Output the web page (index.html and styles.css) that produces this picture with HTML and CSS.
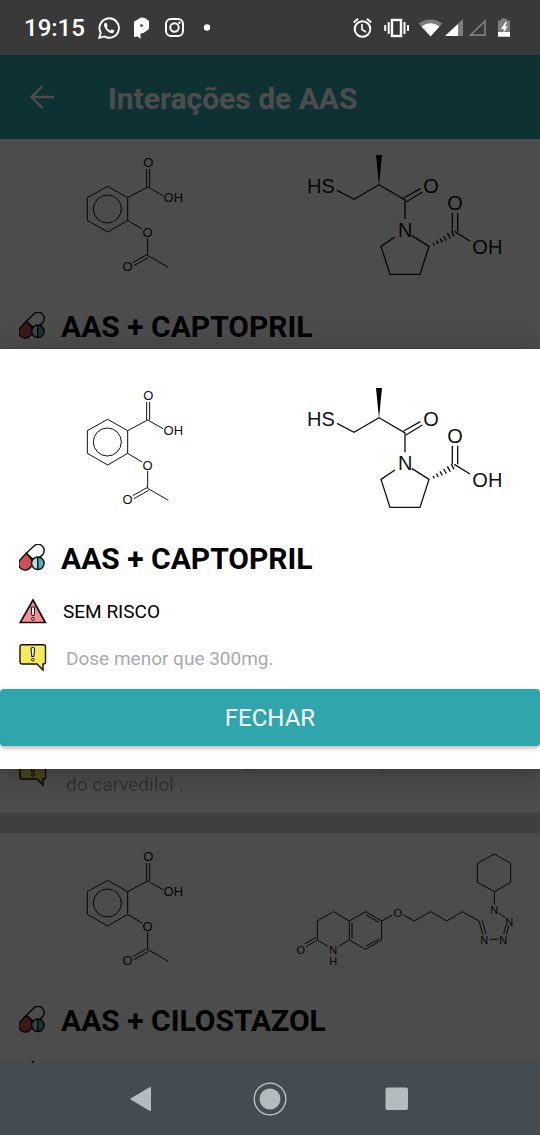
FILE: index.html
```html
<!DOCTYPE html>
<html lang="pt-BR">
<head>
<meta charset="utf-8">
<meta name="viewport" content="width=device-width, initial-scale=1">
<title>Interações de AAS</title>
<link rel="stylesheet" href="styles.css">
</head>
<body>
<svg class="sprite" aria-hidden="true">
  <symbol id="pills" viewBox="1 0 29 29">
    <path d="M8.500 9.500 16 2.500A6.200 6.200 0 0 1 25.500 11L18 18Z" fill="#fff" stroke="#111" stroke-width="1.500"/>
    <path d="M8.500 9.500 3 15.500A6.500 6.500 0 0 0 11.500 25.500L16 21 13.500 15Z" fill="#cf5055" stroke="#111" stroke-width="1.500"/>
    <circle cx="20.500" cy="20" r="6.500" fill="#b4dfe2"/>
    <path d="M20.500 13.500a6.500 6.500 0 0 1 0 13z" fill="#4db3b3"/>
    <circle cx="20.500" cy="20" r="6.500" fill="none" stroke="#111" stroke-width="1.500"/>
    <path d="M20.500 13.500v13" stroke="#111" stroke-width="1.500"/>
  </symbol>
  <symbol id="warning" viewBox="0 0 28 28">
    <path d="M14 3 26.300 25.500H1.200Z" fill="#f58f94" stroke="#111" stroke-width="1.700"/>
    <path d="M12.300 10h3.400l-.5 8.500h-2.400z" fill="#fff" stroke="#111" stroke-width="1"/>
    <circle cx="14" cy="21.800" r="1.400" fill="#fff" stroke="#111"/>
  </symbol>
  <symbol id="note" viewBox="0 0 28 28">
    <path d="M3 .700H24.500a2 2 0 0 1 2 2V18a2 2 0 0 1-2 2H24V26L18 20H3a2 2 0 0 1-2-2V2.700a2 2 0 0 1 2-2Z" fill="#f8e957" stroke="#111" stroke-width="1.400"/>
    <path d="M12 5q0-1.500 1.800-1.500T15.600 5L14.800 12.500h-2z" fill="#fff" stroke="#111" stroke-width="1.100"/>
    <circle cx="13.800" cy="15.700" r="1.300" fill="#fff" stroke="#111"/>
  </symbol>
</svg>

<div class="phone">
  <header class="status">
    <div class="status-group">
      <span class="clock">19:15</span>
      <svg class="s-icon" viewBox="0 0 22 22"><path d="M1.300 20.800 2.700 15.700A9.700 9.700 0 1 1 6.300 19.400Z" fill="none" stroke="#fff" stroke-width="1.900"/><path d="M7.600 5.800 6.300 6.600Q5.300 9 8 12.500T14.500 16.300Q16.500 15.500 16.300 13.600L13.700 12.300 12.300 13.800Q10 12.900 8.700 10.200L9.600 8.900 8.600 6Z" fill="#fff"/></svg>
      <svg class="s-icon" viewBox="0 0 22 22"><path fill-rule="evenodd" d="M3 4.500 6 3 10 .500 14 1 18 4V12L12.500 16 9.500 16.500V22L6.500 19.500 3 20ZM9.500 6.800V10.200L12.800 8.500Z" fill="#fff"/></svg>
      <svg class="s-icon" viewBox="0 0 22 22"><rect x="2" y="2" width="17" height="17" rx="5" fill="none" stroke="#fff" stroke-width="2"/><circle cx="10.500" cy="10.500" r="4.200" fill="none" stroke="#fff" stroke-width="2"/><circle cx="15.500" cy="5.700" r="1.200" fill="#fff"/></svg>
      <svg class="s-icon" viewBox="0 0 22 22"><circle cx="10" cy="10.500" r="3.200" fill="#fff"/></svg>
    </div>
    <svg class="signals" viewBox="0 0 162 24" aria-label="Alarme, vibrar, rede e bateria">
      <g fill="none" stroke="#fff" stroke-width="2"><circle cx="12.500" cy="13" r="7.800"/><path d="M12 8v5.500l4 2.500" stroke-width="1.600"/><path d="M3.800 6.500 8 2.800M21.200 6.500 17 2.800"/><rect x="42" y="4" width="9" height="16" stroke-width="2.400"/><path d="M38.700 6v12M54.500 6v12M35.200 9v6M58 9v6"/></g>
      <path d="M68.500 7.500Q80.500-.500 92.500 7.500L80.500 20Z" fill="#7d7d7d"/>
      <path d="M71.500 10.500Q80.500 4 89.500 10.500L80.500 20.500Z" fill="#fff"/>
      <path d="M113 3V20H95Z" fill="#7d7d7d"/><path d="M108 8V20H95Z" fill="#fff"/>
      <path d="M135 5V19.200H120.500Z" fill="none" stroke="#7d7d7d" stroke-width="1.700"/>
      <path d="M151 2.500h6v2h3V16h-12V4.500h3Z" fill="#7d7d7d"/><path d="M148 16h12v4.700h-12Z" fill="#fff"/><path d="M155.500 6 151 13h2.700v3.500L157.500 10.500h-2.500l2-4.500Z" fill="#fff"/>
    </svg>
  </header>

  <div class="app">
    <div class="appbar">
      <button class="back" type="button" aria-label="Voltar"><svg viewBox="0 0 26 26"><path d="M25 13H3M13.500 2 2.500 13l11 11" fill="none" stroke="#fff" stroke-width="2.400"/></svg></button>
      <h1>Interações de AAS</h1>
    </div>

    <main class="list">
      <article class="card">
        <div class="molecules">
          <svg class="mol small" viewBox="-210 -24 810 450"><path d="M113 118 173 152V220L113 255 52 220V152ZM173 152 233 120 279 146M230 120V66M239 120V66M173 220 216 246M233 273V325L295 361M233 322 188 347M236 331 192 356"/><circle cx="112" cy="186" r="42"/><text x="235" y="61">O</text><text x="310" y="166">OH</text><text x="233" y="269">O</text><text x="173" y="373">O</text></svg>
          <svg class="mol large" viewBox="-75 -9 810 450"><path d="M126 145 177 172 252 128 330 174V232M326 168 376 140M333 180 382 150M350 280 402 313 375 397H285L258 313 300 285M472 268V212M488 268V212M478 268 525 297"/><path class="solid" d="M252 130 243 39H261Z"/><path d="M414 303 418 310M424 296 430 306M435 289 442 301M446 282 454 296M457 274 466 290M469 267 477 283"/><text x="78" y="152">HS</text><text x="408" y="152">O</text><text x="331" y="284">N</text><text x="480" y="205">O</text><text x="577" y="337">OH</text></svg>
        </div>
        <h2 class="row title"><svg class="icon"><use href="#pills"/></svg>AAS + CAPTOPRIL</h2>
        <p class="row risk"><svg class="icon"><use href="#warning"/></svg></p>
        <p class="row note"><svg class="icon"><use href="#note"/></svg></p>
      </article>

      <article class="card">
        <div class="molecules"></div>
        <h2 class="row title"><svg class="icon"><use href="#pills"/></svg></h2>
        <p class="row risk"><svg class="icon"><use href="#warning"/></svg></p>
        <p class="row note"><svg class="icon"><use href="#note"/></svg><span>Reduz o efeito clínico, se necessários,<br>do carvedilol .</span></p>
      </article>

      <article class="card">
        <div class="molecules">
          <svg class="mol small" viewBox="-210 -24 810 450"><path d="M113 118 173 152V220L113 255 52 220V152ZM173 152 233 120 279 146M230 120V66M239 120V66M173 220 216 246M233 273V325L295 361M233 322 188 347M236 331 192 356"/><circle cx="112" cy="186" r="42"/><text x="235" y="61">O</text><text x="310" y="166">OH</text><text x="233" y="269">O</text><text x="173" y="373">O</text></svg>
          <svg class="mol tiny" viewBox="-30 -21 810 450"><path d="M643 42 692 70V127L643 155 592 127V70ZM643 155V194M658 220 676 233M686 258 679 284M678 256 671 281M629 298H655M597 243 609 284M606 241 618 281M597 243 547 215 500 243 452 215 403 243 369 224M337 225 305 243V300L257 328 208 300V243L257 215 305 243M257 224 297 247M298 297 257 319M216 248V296M208 243 160 215 112 243V300L145 320M175 320 208 300M112 300 78 320M108 292 74 312"/><text x="643" y="221">N</text><text x="688" y="257">N</text><text x="670" y="311">N</text><text x="613" y="311">N</text><text x="353" y="230">O</text><text x="62" y="342">O</text><text x="160" y="341">N</text><text x="160" y="375">H</text></svg>
        </div>
        <h2 class="row title"><svg class="icon"><use href="#pills"/></svg>AAS + CILOSTAZOL</h2>
        <p class="row risk"><svg class="icon"><use href="#warning"/></svg></p>
      </article>
    </main>

    <div class="scrim">
      <section class="dialog" role="dialog" aria-modal="true" aria-label="AAS + CAPTOPRIL">
        <div class="molecules">
          <svg class="mol small" viewBox="-210 -27 810 450"><path d="M113 118 173 152V220L113 255 52 220V152ZM173 152 233 120 279 146M230 120V66M239 120V66M173 220 216 246M233 273V325L295 361M233 322 188 347M236 331 192 356"/><circle cx="112" cy="186" r="42"/><text x="235" y="61">O</text><text x="310" y="166">OH</text><text x="233" y="269">O</text><text x="173" y="373">O</text></svg>
          <svg class="mol large" viewBox="-75 -12 810 450"><path d="M126 145 177 172 252 128 330 174V232M326 168 376 140M333 180 382 150M350 280 402 313 375 397H285L258 313 300 285M472 268V212M488 268V212M478 268 525 297"/><path class="solid" d="M252 130 243 39H261Z"/><path d="M414 303 418 310M424 296 430 306M435 289 442 301M446 282 454 296M457 274 466 290M469 267 477 283"/><text x="78" y="152">HS</text><text x="408" y="152">O</text><text x="331" y="284">N</text><text x="480" y="205">O</text><text x="577" y="337">OH</text></svg>
        </div>
        <h2 class="row title"><svg class="icon"><use href="#pills"/></svg>AAS + CAPTOPRIL</h2>
        <p class="row risk"><svg class="icon"><use href="#warning"/></svg>SEM RISCO</p>
        <p class="row note"><svg class="icon"><use href="#note"/></svg><span>Dose menor que 300mg.</span></p>
        <button class="close" type="button">FECHAR</button>
      </section>
    </div>
  </div>

  <nav class="navbar">
    <button type="button" aria-label="Voltar"><svg viewBox="0 0 34 34"><path d="M5.500 17 24 6V28Z" fill="#b5bcbf" stroke="#b5bcbf" stroke-width="2" stroke-linejoin="round"/></svg></button>
    <button type="button" aria-label="Início"><svg viewBox="0 0 34 34"><circle cx="17" cy="17" r="15.800" fill="none" stroke="#b5bcbf" stroke-width="1.500"/><circle cx="17" cy="17" r="10.500" fill="#b5bcbf"/></svg></button>
    <button type="button" aria-label="Recentes"><svg viewBox="0 0 34 34"><rect x="5.500" y="5.500" width="22.500" height="22.500" rx="2" fill="#b5bcbf"/></svg></button>
  </nav>
</div>
</body>
</html>
```

FILE: styles.css
```css
* { box-sizing: border-box; }

body {
  margin: 0;
  font-family: Roboto, "Liberation Sans", sans-serif;
  color: #000;
}

h1, h2, p { margin: 0; }

button {
  margin: 0;
  padding: 0;
  border: 0;
  background: none;
  font: inherit;
}

svg { display: block; }

.sprite {
  position: absolute;
  width: 0;
  height: 0;
}

.phone {
  display: flex;
  flex-direction: column;
  height: 100vh;
}

.status {
  display: flex;
  align-items: center;
  justify-content: space-between;
  height: 55px;
  padding: 0 28px 0 24px;
  background: #393939;
  color: #fff;
}

.status-group {
  display: flex;
  align-items: center;
  gap: 11px;
}

.clock {
  margin-right: 2px;
  font-size: 24px;
  font-weight: 500;
}

.s-icon { width: 22px; height: 22px; }

.signals { width: 162px; height: 24px; }

.app {
  position: relative;
  flex: 1;
  min-height: 0;
  overflow: hidden;
}

.appbar {
  display: flex;
  align-items: center;
  gap: 53px;
  height: 84px;
  padding: 0 29px;
  background: #2fa5ac;
  color: #fff;
}

.appbar h1 {
  font-size: 30px;
  line-height: 36px;
  font-weight: 700;
  padding-top: 4px;
}

.back, .back svg { width: 26px; height: 26px; }

.list {
  display: flex;
  flex-direction: column;
  gap: 20px;
  background: #d3d3d3;
}

.card {
  padding-bottom: 17px;
  background: #fff;
}

.molecules {
  display: grid;
  grid-template-columns: 1fr 1fr;
  height: 150px;
}

.mol {
  width: 100%;
  height: 150px;
  fill: none;
  stroke: #111;
  stroke-width: 3px;
}

.mol text {
  fill: #111;
  stroke: none;
  font-family: "Liberation Sans", Arial, sans-serif;
  text-anchor: middle;
}

.mol .solid { fill: #000; stroke: none; }
.small text { font-size: 39px; }
.large text { font-size: 60px; }
.large { stroke-width: 4px; }
.tiny text { font-size: 33px; }

.row {
  display: flex;
  align-items: center;
  padding: 0 19px;
}

.icon { flex: none; width: 28px; height: 28px; }

.title {
  gap: 14px;
  height: 40px;
  margin-top: 17px;
  font-size: 30px;
  font-weight: 700;
}

.risk {
  gap: 16px;
  height: 28px;
  margin-top: 19px;
  font-size: 19px;
}

.note {
  gap: 19px;
  min-height: 46px;
  margin-top: 10px;
  color: #aaa;
  font-size: 19px;
  line-height: 23px;
}

.scrim {
  position: absolute;
  inset: 0;
  display: flex;
  flex-direction: column;
  justify-content: center;
  background: rgba(0, 0, 0, 0.7);
}

.dialog {
  padding: 22px 0 23px;
  background: #fff;
  box-shadow: 0 4px 24px rgba(0, 0, 0, 0.3);
}

.close {
  display: block;
  width: 100%;
  height: 57px;
  margin-top: 8px;
  border-radius: 4px;
  background: #2fa5ac;
  color: #fff;
  font-size: 24px;
  box-shadow: 0 2px 5px rgba(0, 0, 0, 0.3);
}

.navbar {
  display: flex;
  align-items: center;
  justify-content: center;
  gap: 93px;
  height: 72px;
  background: #444c52;
}

.navbar button, .navbar svg { width: 34px; height: 34px; }
```
